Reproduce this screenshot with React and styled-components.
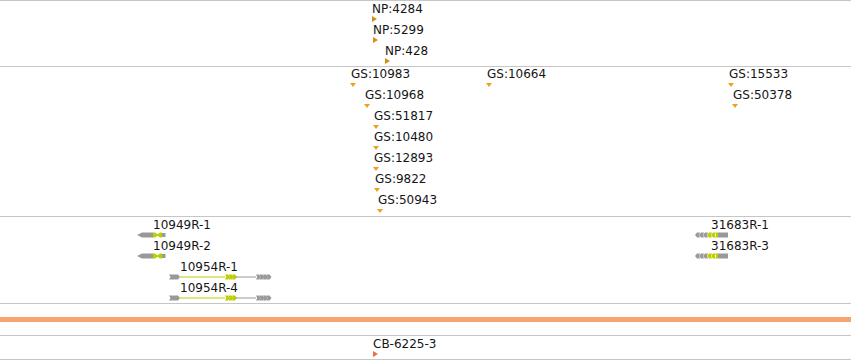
import React from 'react'
import styled, { createGlobalStyle } from 'styled-components'

const GlobalStyle = createGlobalStyle`
  html, body {
    margin: 0;
    padding: 0;
    background: #ffffff;
  }
  body {
    font-family: 'DejaVu Sans', 'Liberation Sans', sans-serif;
  }
`

const GRAY = '#999999'
const LIME = '#bccf00'
const LINE = '#c6c6c6'

const Browser = styled.div`
  width: 851px;
  height: 360px;
  overflow: hidden;
  display: flex;
  flex-direction: column;
  background: #ffffff;
`

const Track = styled.div`
  position: relative;
  flex: none;
  height: ${p => p.$height}px;
  border-top: 1px solid ${LINE};
  ${p => p.$last && `border-bottom: 1px solid ${LINE};`}
`

const Overview = styled.div`
  flex: none;
  border-top: 1px solid ${LINE};
  padding: 13px 0;
`

const Band = styled.div`
  height: 5px;
  background: #f5a472;
`

const Feature = styled.div`
  position: absolute;
  left: ${p => p.$x}px;
  top: ${p => p.$y}px;
  display: flex;
  flex-direction: column;
  align-items: flex-start;
`

const Label = styled.span`
  font-size: 12px;
  line-height: 14px;
  color: #151515;
  white-space: nowrap;
  margin-left: ${p => p.$offset || 0}px;
`

const RightMarker = styled.span`
  display: block;
  width: 0;
  height: 0;
  border-left: 5px solid ${p => p.$color};
  border-top: 3px solid transparent;
  border-bottom: 3px solid transparent;
  margin-top: ${p => p.$gap || 0}px;
`

const DownMarker = styled.span`
  display: block;
  width: 0;
  height: 0;
  border-top: 4px solid #efa11e;
  border-left: 3px solid transparent;
  border-right: 3px solid transparent;
  margin-top: 2px;
`

const Glyph = styled.svg`
  display: block;
  overflow: visible;
`

const npFeatures = [
  { name: 'NP:4284', x: 372, row: 0 },
  { name: 'NP:5299', x: 373, row: 1 },
  { name: 'NP:428', x: 385, row: 2 },
]

const gsFeatures = [
  { name: 'GS:10983', x: 350, row: 0 },
  { name: 'GS:10664', x: 486, row: 0 },
  { name: 'GS:15533', x: 728, row: 0 },
  { name: 'GS:10968', x: 364, row: 1 },
  { name: 'GS:50378', x: 732, row: 1 },
  { name: 'GS:51817', x: 373, row: 2 },
  { name: 'GS:10480', x: 373, row: 3 },
  { name: 'GS:12893', x: 373, row: 4 },
  { name: 'GS:9822', x: 374, row: 5 },
  { name: 'GS:50943', x: 377, row: 6 },
]

const genes = [
  { name: '10949R-1', x: 137, row: 0, kind: 'minusShort', offset: 16 },
  { name: '10949R-2', x: 137, row: 1, kind: 'minusShort', offset: 16 },
  { name: '10954R-1', x: 169, row: 2, kind: 'plusLong', offset: 11 },
  { name: '10954R-4', x: 169, row: 3, kind: 'plusLong', offset: 11 },
  { name: '31683R-1', x: 695, row: 0, kind: 'minusChevron', offset: 16 },
  { name: '31683R-3', x: 695, row: 1, kind: 'minusChevron', offset: 16 },
]

// chevrons drawn on exon blocks to show strand
const chevronRight = (x) => `${x},0.5 ${x + 3},0.5 ${x + 5},3 ${x + 3},5.5 ${x},5.5 ${x + 1.2},3`
const chevronLeft = (x) => `${x + 5},0.5 ${x + 2},0.5 ${x},3 ${x + 2},5.5 ${x + 5},5.5 ${x + 3.8},3`

function GeneGlyph({ kind }) {
  if (kind === 'minusShort') {
    return (
      <Glyph width="29" height="6" viewBox="0 0 29 6">
        <polygon points="0,3 5,0.5 16,0.5 16,5.5 5,5.5" fill={GRAY} />
        <polygon points="16,0.5 18,0.5 20.5,2.2 23,0.5 25,0.5 25,5.5 23,5.5 20.5,3.8 18,5.5 16,5.5" fill={LIME} />
        <rect x="25" y="1" width="3.5" height="4" fill={GRAY} />
      </Glyph>
    )
  }
  if (kind === 'plusLong') {
    return (
      <Glyph width="103" height="6" viewBox="0 0 103 6">
        <polygon points="0,0.5 9,0.5 11,3 9,5.5 0,5.5 1.5,3" fill={GRAY} />
        <line x1="11" y1="3" x2="56" y2="3" stroke={LIME} strokeWidth="1" />
        {[56, 59.5, 63].map(x => <polygon key={x} points={chevronRight(x)} fill={LIME} />)}
        <line x1="67" y1="3" x2="87" y2="3" stroke={GRAY} strokeWidth="1" />
        {[87, 90.5, 94, 97.5].map(x => <polygon key={x} points={chevronRight(x)} fill={GRAY} />)}
      </Glyph>
    )
  }
  return (
    <Glyph width="34" height="6" viewBox="0 0 34 6">
      {[0, 4, 8].map(x => <polygon key={x} points={chevronLeft(x)} fill={GRAY} />)}
      {[12, 16].map(x => <polygon key={x} points={chevronLeft(x)} fill={LIME} />)}
      <rect x="21" y="0.5" width="2" height="5" fill={LIME} />
      <rect x="23" y="0.5" width="10" height="5" fill={GRAY} />
    </Glyph>
  )
}

export default function App() {
  return (
    <>
      <GlobalStyle />
      <Browser>
        <Track $height={65}>
          {npFeatures.map(f => (
            <Feature key={f.name} $x={f.x} $y={1 + 21 * f.row}>
              <Label>{f.name}</Label>
              <RightMarker $color="#d38f0d" />
            </Feature>
          ))}
        </Track>

        <Track $height={149}>
          {gsFeatures.map(f => (
            <Feature key={f.name} $x={f.x} $y={21 * f.row}>
              <Label $offset={1}>{f.name}</Label>
              <DownMarker />
            </Feature>
          ))}
        </Track>

        <Track $height={86}>
          {genes.map(g => (
            <Feature key={g.name} $x={g.x} $y={1 + 21 * g.row}>
              <Label $offset={g.offset}>{g.name}</Label>
              <GeneGlyph kind={g.kind} />
            </Feature>
          ))}
        </Track>

        <Overview>
          <Band />
        </Overview>

        <Track $height={23} $last>
          <Feature $x={373} $y={1}>
            <Label>CB-6225-3</Label>
            <RightMarker $color="#f26a48" />
          </Feature>
        </Track>
      </Browser>
    </>
  )
}
